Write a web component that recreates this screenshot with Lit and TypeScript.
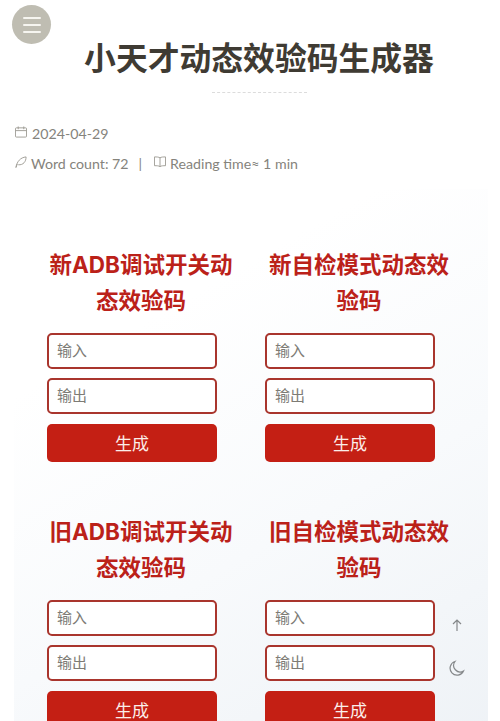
import { LitElement, html, css } from "lit";
import { customElement } from "lit/decorators.js";

const CARDS = [
  "新ADB调试开关动态效验码",
  "新自检模式动态效验码",
  "旧ADB调试开关动态效验码",
  "旧自检模式动态效验码",
];

@customElement("app-root")
export class AppRoot extends LitElement {
  static styles = css`
    :host {
      display: block;
      position: relative;
      width: 500px;
      height: 721px;
      overflow: hidden;
      background: #fff;
      font-family: "Lato", "Noto Sans CJK SC", sans-serif;
      color: #85837c;
    }
    .menu {
      position: absolute;
      left: 12px;
      top: 5px;
      width: 39px;
      height: 39px;
      border-radius: 50%;
      background: #bfbdb2;
      display: flex;
      flex-direction: column;
      justify-content: center;
      align-items: center;
      gap: 5px;
    }
    .menu span {
      display: block;
      width: 18px;
      height: 2px;
      border-radius: 1px;
      background: #f6f5f0;
    }
    header {
      padding: 35px 0 0 18px;
      text-align: center;
    }
    h1 {
      margin: 0;
      font: 700 31.8px/42px "Noto Sans CJK SC", sans-serif;
      color: #3f3b33;
    }
    .rule {
      width: 95px;
      margin: 15px auto 0;
      border-top: 1px dashed #dcdcdc;
    }
    .meta {
      padding: 26px 0 0 15px;
      font-size: 14.2px;
      line-height: 30px;
    }
    .row {
      display: flex;
      align-items: center;
      gap: 4px;
      height: 30px;
    }
    .row svg {
      flex: none;
      width: 12px;
      height: 12px;
      margin-top: -5px;
      fill: none;
      stroke: #9c9a92;
      stroke-width: 1;
    }
    .date {
      margin-left: 1px;
    }
    .sep {
      margin: 0 8px 0 6px;
    }
    .panel {
      margin: 10px 12px 0 14px;
      padding: 58px 0 0 33px;
      height: 560px;
      box-sizing: border-box;
      display: grid;
      grid-template-columns: 188px 188px;
      column-gap: 30px;
      row-gap: 52px;
      align-content: start;
      background: linear-gradient(150deg, #fff 25%, #f8fafc 60%, #eef2f6 100%);
    }
    h2 {
      margin: 0 0 14px;
      text-align: center;
      font: 700 22.5px/36px "Inter", "Noto Sans CJK SC", sans-serif;
      color: #bb2119;
    }
    .field {
      box-sizing: border-box;
      width: 170px;
      height: 36px;
      margin-bottom: 9px;
      padding: 0 8px;
      border: 2px solid #a9352d;
      border-radius: 5px;
      background: #fff;
      font: 15px/30px "Noto Sans CJK SC", sans-serif;
      color: #7d7b75;
    }
    .field + .field {
      margin-bottom: 10px;
    }
    .btn {
      width: 170px;
      height: 38px;
      border-radius: 5px;
      background: #c41f14;
      color: #fbeeea;
      text-align: center;
      font: 17px/37px "Noto Sans CJK SC", sans-serif;
    }
    .float {
      position: absolute;
      left: 449px;
      width: 16px;
      height: 16px;
      fill: none;
      stroke: #85888a;
      stroke-width: 1.2;
    }
    .up { top: 617px; }
    .moon { top: 660px; }
  `;

  render() {
    return html`
      <div class="menu"><span></span><span></span><span></span></div>
      <header>
        <h1>小天才动态效验码生成器</h1>
        <div class="rule"></div>
      </header>
      <div class="meta">
        <div class="row">
          <svg viewBox="0 0 13 13"><rect x="0.5" y="2" width="12" height="10" rx="1"/><path d="M0.5 5h12M3.5 0.5v3M9.5 0.5v3"/></svg>
          <span class="date">2024-04-29</span>
        </div>
        <div class="row">
          <svg viewBox="0 0 13 13"><path d="M1 12.500C2 6 6 1.500 12 1c0 5-3 9-8.500 8.500M1 12.500l1.500-4"/></svg>
          <span>Word count: 72</span>
          <span class="sep">|</span>
          <svg viewBox="0 0 13 13"><path d="M6.500 2C5 1 3 1 0.500 1v9.500c2.500 0 4.500 0 6 1 1.500-1 3.500-1 6-1V1c-2.500 0-4.500 0-6 1zM6.500 2v9.500"/></svg>
          <span>Reading time≈ 1 min</span>
        </div>
      </div>
      <div class="panel">
        ${CARDS.map(
          (t) => html`
            <section>
              <h2>${t}</h2>
              <div class="field">输入</div>
              <div class="field">输出</div>
              <div class="btn">生成</div>
            </section>
          `
        )}
      </div>
      <svg class="float up" viewBox="0 0 16 16"><path d="M8 14V3M4 7l4-4 4 4"/></svg>
      <svg class="float moon" viewBox="0 0 16 16"><path d="M6 1.500A7 7 0 1 0 14.500 11 6.500 6.500 0 0 1 6 1.500z"/></svg>
    `;
  }
}
